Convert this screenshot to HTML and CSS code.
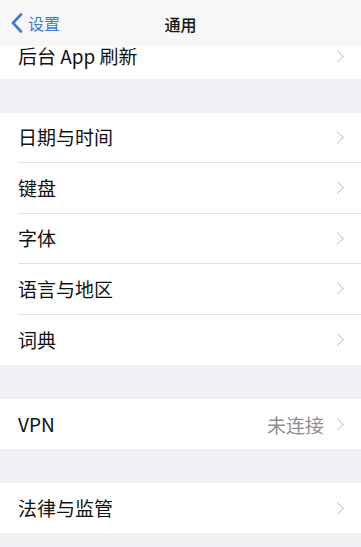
FILE: index.html
```html
<!DOCTYPE html>
<html lang="zh">
<head>
<meta charset="utf-8">
<link rel="stylesheet" href="styles.css">
</head>
<body>
<div class="page">
  <div class="nav">
    <div class="back">
      <svg class="back-icon" width="12" height="20" viewBox="0 0 12 20"><path d="M10 1.5 L2 10 L10 18.5" fill="none" stroke="#3a7bd0" stroke-width="2.6" stroke-linecap="round" stroke-linejoin="round"/></svg>
      <span>设置</span>
    </div>
    <div class="title">通用</div>
  </div>
  <div class="group first">
    <div class="row"><span class="label">后台 App 刷新</span><span class="chev"></span></div>
  </div>
  <div class="gap g1"></div>
  <div class="group">
    <div class="row sep"><span class="label">日期与时间</span><span class="chev"></span></div>
    <div class="row sep"><span class="label">键盘</span><span class="chev"></span></div>
    <div class="row sep"><span class="label">字体</span><span class="chev"></span></div>
    <div class="row sep"><span class="label">语言与地区</span><span class="chev"></span></div>
    <div class="row"><span class="label">词典</span><span class="chev"></span></div>
  </div>
  <div class="gap g2"></div>
  <div class="group">
    <div class="row h50"><span class="label">VPN</span><span class="value">未连接</span><span class="chev"></span></div>
  </div>
  <div class="gap g3"></div>
  <div class="group">
    <div class="row h50"><span class="label">法律与监管</span><span class="chev"></span></div>
  </div>
</div>
</body>
</html>
```
FILE: styles.css
```css
html, body {
  margin: 0;
  padding: 0;
  background: #efeff4;
}
.page {
  width: 361px;
  height: 547px;
  overflow: hidden;
  background: #efeff4;
  font-family: "Noto Sans CJK SC", "Noto Sans", sans-serif;
}
.nav {
  height: 46px;
  background: #f7f7f7;
  position: relative;
  display: flex;
  align-items: center;
  justify-content: center;
}
.back {
  position: absolute;
  left: 11px;
  top: 13px;
  display: flex;
  align-items: center;
  gap: 5px;
  color: #3a7bd0;
  font-size: 16px;
  line-height: 20px;
}
.back-icon { display: block; }
.title {
  font-size: 16px;
  color: #111;
  margin-top: 2px;
  font-weight: 500;
}
.group {
  background: #fff;
  display: flex;
  flex-direction: column;
}
.row {
  height: 50.5px;
  display: flex;
  align-items: center;
  margin-left: 18px;
  padding-right: 16px;
  box-sizing: border-box;
}
.row.h50 { height: 50px; }
.group.first .row { height: 33px; padding-bottom: 13px; }
.row.sep { border-bottom: 1px solid #e2e2e4; }
.label {
  flex: 1;
  font-size: 19px;
  color: #111;
  line-height: 24px;
}
.value {
  font-size: 19px;
  color: #8e8e93;
  margin-right: 9px;
}
.chev {
  width: 8px;
  height: 8px;
  border-top: 1.8px solid #c6c6cb;
  border-right: 1.8px solid #c6c6cb;
  transform: rotate(45deg);
  margin-right: 3px;
}
.gap.g1 { height: 33.5px; }
.gap.g2 { height: 34px; }
.gap.g3 { height: 34px; }
```
